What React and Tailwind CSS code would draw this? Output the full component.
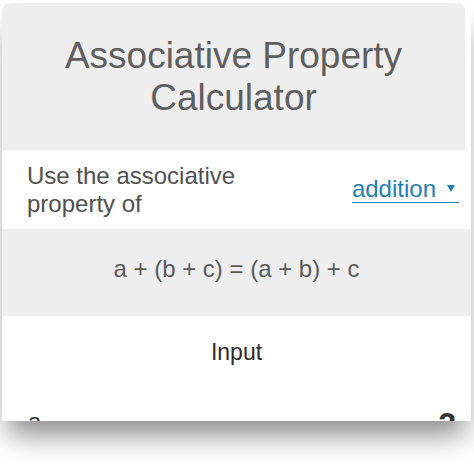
export default function App() {
  return (
    <div
      className="w-[474px] h-[474px] bg-white overflow-hidden pl-[2px] pt-[3px]"
      style={{ fontFamily: '"Liberation Sans", Arial, sans-serif' }}
    >
      <div className="w-[469px] h-[418px] overflow-hidden rounded-t-[8px] bg-white shadow-[0_20px_28px_-6px_rgba(0,0,0,0.45)]">
        <div className="mr-[6px] h-[147px] bg-[#eeeeee] rounded-t-[8px] flex items-center justify-center text-center">
          <h1 className="text-[37px] leading-[42px] text-[#5f5f5f] font-normal">
            Associative Property
            <br />
            Calculator
          </h1>
        </div>
        <div className="h-[79px] flex items-center justify-between pl-[25px] pr-[12px]">
          <div className="text-[24px] leading-[28px] text-[#505050]">
            Use the associative
            <br />
            property of
          </div>
          <span className="inline-flex items-center text-[24px] leading-[26px] text-[#1f7fb4] border-b border-[#1f7fb4] pr-[4px] whitespace-nowrap">
            <span>addition</span>
            <svg className="ml-[11px] mb-[2px]" width="8" height="7" viewBox="0 0 8 7">
              <path d="M0 0 L8 0 L4 7 Z" fill="#1f7fb4" />
            </svg>
          </span>
        </div>
        <div className="h-[87px] bg-[#eeeeee] pt-[26px] text-center text-[24px] leading-[28px] text-[#5a5a5a]">
          a + (b + c) = (a + b) + c
        </div>
        <div className="pt-[22px]">
          <div className="text-center text-[23px] leading-[28px] text-[#2c2c2c]">Input</div>
          <div className="mt-[42px] flex items-start justify-between pl-[26px] pr-[15px]">
            <span className="text-[24px] leading-[28px] text-[#333333]">a</span>
            <span className="text-[32px] leading-[32px] font-bold text-[#333333]">2</span>
          </div>
        </div>
      </div>
    </div>
  );
}
